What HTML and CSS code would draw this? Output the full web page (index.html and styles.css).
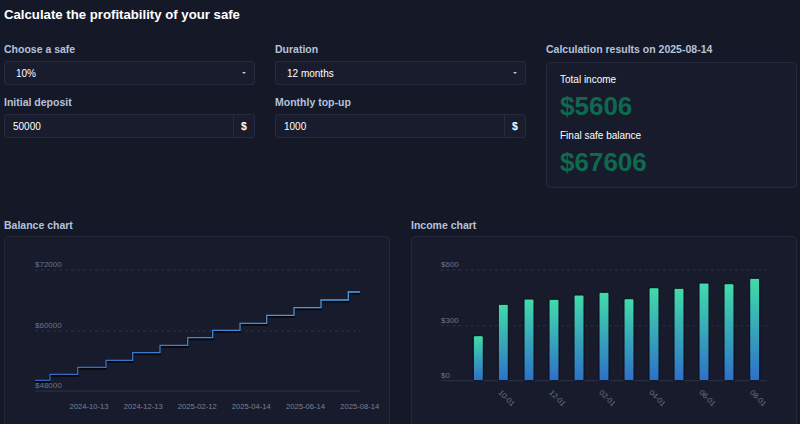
FILE: index.html
```html
<!DOCTYPE html>
<html lang="en">
<head>
<meta charset="utf-8">
<title>Safe profitability calculator</title>
<link rel="stylesheet" href="styles.css">
</head>
<body>
<div class="page">
  <h1 class="title">Calculate the profitability of your safe</h1>

  <div class="top">
    <div class="col">
      <div class="field">
        <div class="label">Choose a safe</div>
        <div class="select"><span>10%</span><span class="caret"></span></div>
      </div>
      <div class="field">
        <div class="label">Initial deposit</div>
        <div class="group"><span class="val">50000</span><span class="addon">$</span></div>
      </div>
    </div>
    <div class="col">
      <div class="field">
        <div class="label">Duration</div>
        <div class="select"><span>12 months</span><span class="caret"></span></div>
      </div>
      <div class="field">
        <div class="label">Monthly top-up</div>
        <div class="group"><span class="val">1000</span><span class="addon">$</span></div>
      </div>
    </div>
    <div class="col">
      <div class="label">Calculation results on 2025-08-14</div>
      <div class="results">
        <div class="r-label">Total income</div>
        <div class="r-value">$5606</div>
        <div class="r-label">Final safe balance</div>
        <div class="r-value">$67606</div>
      </div>
    </div>
  </div>

  <div class="charts">
    <div class="chart-col">
      <div class="label">Balance chart</div>
      <div class="chart-card">
        <svg class="chart" width="384" height="198" viewBox="0 0 384 198">
          <defs>
            <linearGradient id="lineGrad" gradientUnits="userSpaceOnUse" x1="30" y1="0" x2="355" y2="0">
              <stop offset="0" stop-color="#3464bb"/>
              <stop offset="1" stop-color="#4ea5e6"/>
            </linearGradient>
          </defs>
          <g class="grid">
            <line x1="30" y1="33" x2="355" y2="33" class="dash"/>
            <line x1="30" y1="94" x2="355" y2="94" class="dash"/>
            <line x1="30" y1="154" x2="355" y2="154" class="base"/>
          </g>
          <g class="ylab">
            <text x="30" y="30.3">$72000</text>
            <text x="30" y="91.3">$60000</text>
            <text x="30" y="151.3">$48000</text>
          </g>
          <path class="line-shadow" d="M30 143.3 H45 V137.3 H72.7 V130.3 H101 V123.3 H127.7 V115.7 H155 V108.3 H182.7 V100.7 H207.7 V93.3 H235 V86.3 H261.7 V78.3 H289 V70.7 H316 V63 H343.3 V55 H355"/>
          <path class="line" d="M30 143.3 H45 V137.3 H72.7 V130.3 H101 V123.3 H127.7 V115.7 H155 V108.3 H182.7 V100.7 H207.7 V93.3 H235 V86.3 H261.7 V78.3 H289 V70.7 H316 V63 H343.3 V55 H355"/>
          <g class="xlab">
            <text x="84" y="172">2024-10-13</text>
            <text x="138.2" y="172">2024-12-13</text>
            <text x="192.3" y="172">2025-02-12</text>
            <text x="246.3" y="172">2025-04-14</text>
            <text x="300.5" y="172">2025-06-14</text>
            <text x="354.7" y="172">2025-08-14</text>
          </g>
        </svg>
      </div>
    </div>
    <div class="chart-col">
      <div class="label">Income chart</div>
      <div class="chart-card">
        <svg class="chart" width="384" height="198" viewBox="0 0 384 198">
          <defs>
            <linearGradient id="barGrad" x1="0" y1="0" x2="0" y2="1">
              <stop offset="0" stop-color="#41dcaa"/>
              <stop offset="1" stop-color="#2e70c8"/>
            </linearGradient>
          </defs>
          <g class="grid">
            <line x1="28.7" y1="33" x2="354.7" y2="33" class="dash"/>
            <line x1="28.7" y1="88.7" x2="354.7" y2="88.7" class="dash"/>
            <line x1="28.7" y1="143.7" x2="354.7" y2="143.7" class="base"/>
          </g>
          <g class="ylab">
            <text x="29" y="30.3">$600</text>
            <text x="29" y="85.7">$300</text>
            <text x="29" y="140.7">$0</text>
          </g>
          <g class="bars">
            <rect x="61.3" y="98.7" width="10" height="45" rx="1.5"/>
            <rect x="86.3" y="67.3" width="10" height="76.4" rx="1.5"/>
            <rect x="112" y="62" width="10" height="81.7" rx="1.5"/>
            <rect x="137" y="62.3" width="10" height="81.4" rx="1.5"/>
            <rect x="162" y="58" width="10" height="85.7" rx="1.5"/>
            <rect x="187" y="55.3" width="10" height="88.4" rx="1.5"/>
            <rect x="212" y="61.7" width="10" height="82" rx="1.5"/>
            <rect x="237" y="50.7" width="10" height="93" rx="1.5"/>
            <rect x="262" y="51.3" width="10" height="92.4" rx="1.5"/>
            <rect x="287" y="46" width="10" height="97.7" rx="1.5"/>
            <rect x="312" y="46.7" width="10" height="97" rx="1.5"/>
            <rect x="337.7" y="41.3" width="10" height="102.4" rx="1.5"/>
          </g>
          <g class="xlab-rot">
            <text x="86" y="156" transform="rotate(45 86 156)">10-01</text>
            <text x="136.7" y="156" transform="rotate(45 136.7 156)">12-01</text>
            <text x="186.7" y="156" transform="rotate(45 186.7 156)">02-01</text>
            <text x="236.7" y="156" transform="rotate(45 236.7 156)">04-01</text>
            <text x="286.7" y="156" transform="rotate(45 286.7 156)">06-01</text>
            <text x="337.4" y="156" transform="rotate(45 337.4 156)">08-01</text>
          </g>
        </svg>
      </div>
    </div>
  </div>
</div>
</body>
</html>
```

FILE: styles.css
```css
* { box-sizing: border-box; }

html, body {
  margin: 0;
  background: #151827;
  color: #ffffff;
  font-family: "Liberation Sans", Arial, sans-serif;
  overflow: hidden;
}

.page {
  padding: 0 3px 0 4px;
}

.title {
  margin: 0;
  height: 30px;
  line-height: 30px;
  font-size: 13.2px;
  font-weight: bold;
  color: #ffffff;
}

.top {
  display: grid;
  grid-template-columns: repeat(3, 1fr);
  column-gap: 20px;
  margin-top: 11px;
}

.col {
  display: flex;
  flex-direction: column;
  gap: 9px;
}

.col:last-child { gap: 5px; }

.label {
  font-size: 10.5px;
  font-weight: bold;
  line-height: 16px;
  color: #b4c3db;
}

.field .label { margin-bottom: 4px; }

.select,
.group {
  height: 24px;
  border: 1px solid #272b3d;
  border-radius: 3px;
  background: #191c2d;
  font-size: 10px;
  color: #ffffff;
  display: flex;
  align-items: center;
}

.select {
  justify-content: space-between;
  padding: 0 8px 0 11px;
}

.caret {
  width: 0;
  height: 0;
  border-left: 2.5px solid transparent;
  border-right: 2.5px solid transparent;
  border-top: 2.5px solid #c3c7d3;
}

.group .val {
  flex: 1;
  padding-left: 8px;
}

.group .addon {
  width: 21px;
  height: 100%;
  border-left: 1px solid #272b3d;
  display: flex;
  align-items: center;
  justify-content: center;
  font-weight: bold;
  font-size: 10.5px;
}

.results {
  height: 126px;
  border: 1px solid #262a3c;
  border-radius: 4px;
  background: #181b2c;
  padding: 9px 13px;
}

.r-label {
  font-size: 10px;
  line-height: 16px;
  color: #ffffff;
}

.r-value {
  font-size: 26px;
  line-height: 30px;
  font-weight: bold;
  color: #0e6a4e;
  margin: 3px 0 7px;
}

.charts {
  display: grid;
  grid-template-columns: 1fr 1fr;
  column-gap: 21px;
  margin-top: 29px;
}

.chart-col .label { margin-bottom: 3px; }

.chart-card {
  height: 200px;
  border: 1px solid #232738;
  border-radius: 4px;
  background: #181b2c;
}

.chart {
  display: block;
}

.grid .dash {
  stroke: #2d3245;
  stroke-width: 1;
  stroke-dasharray: 3 3;
}

.grid .base {
  stroke: #2d3245;
  stroke-width: 1;
}

.ylab text {
  font-family: "Liberation Sans", Arial, sans-serif;
  font-size: 8px;
  fill: #6c7386;
}

.xlab text {
  font-family: "Liberation Sans", Arial, sans-serif;
  font-size: 7.6px;
  fill: #7a8194;
  text-anchor: middle;
}

.xlab-rot text {
  font-family: "Liberation Sans", Arial, sans-serif;
  font-size: 7.6px;
  fill: #6c7386;
}

.line-shadow {
  fill: none;
  stroke: #07080f;
  stroke-width: 2;
  transform: translateY(1.5px);
}

.line {
  fill: none;
  stroke: url(#lineGrad);
  stroke-width: 1.3;
}

.bars rect {
  fill: url(#barGrad);
  stroke: #0a0c15;
  stroke-width: 1;
}
```
